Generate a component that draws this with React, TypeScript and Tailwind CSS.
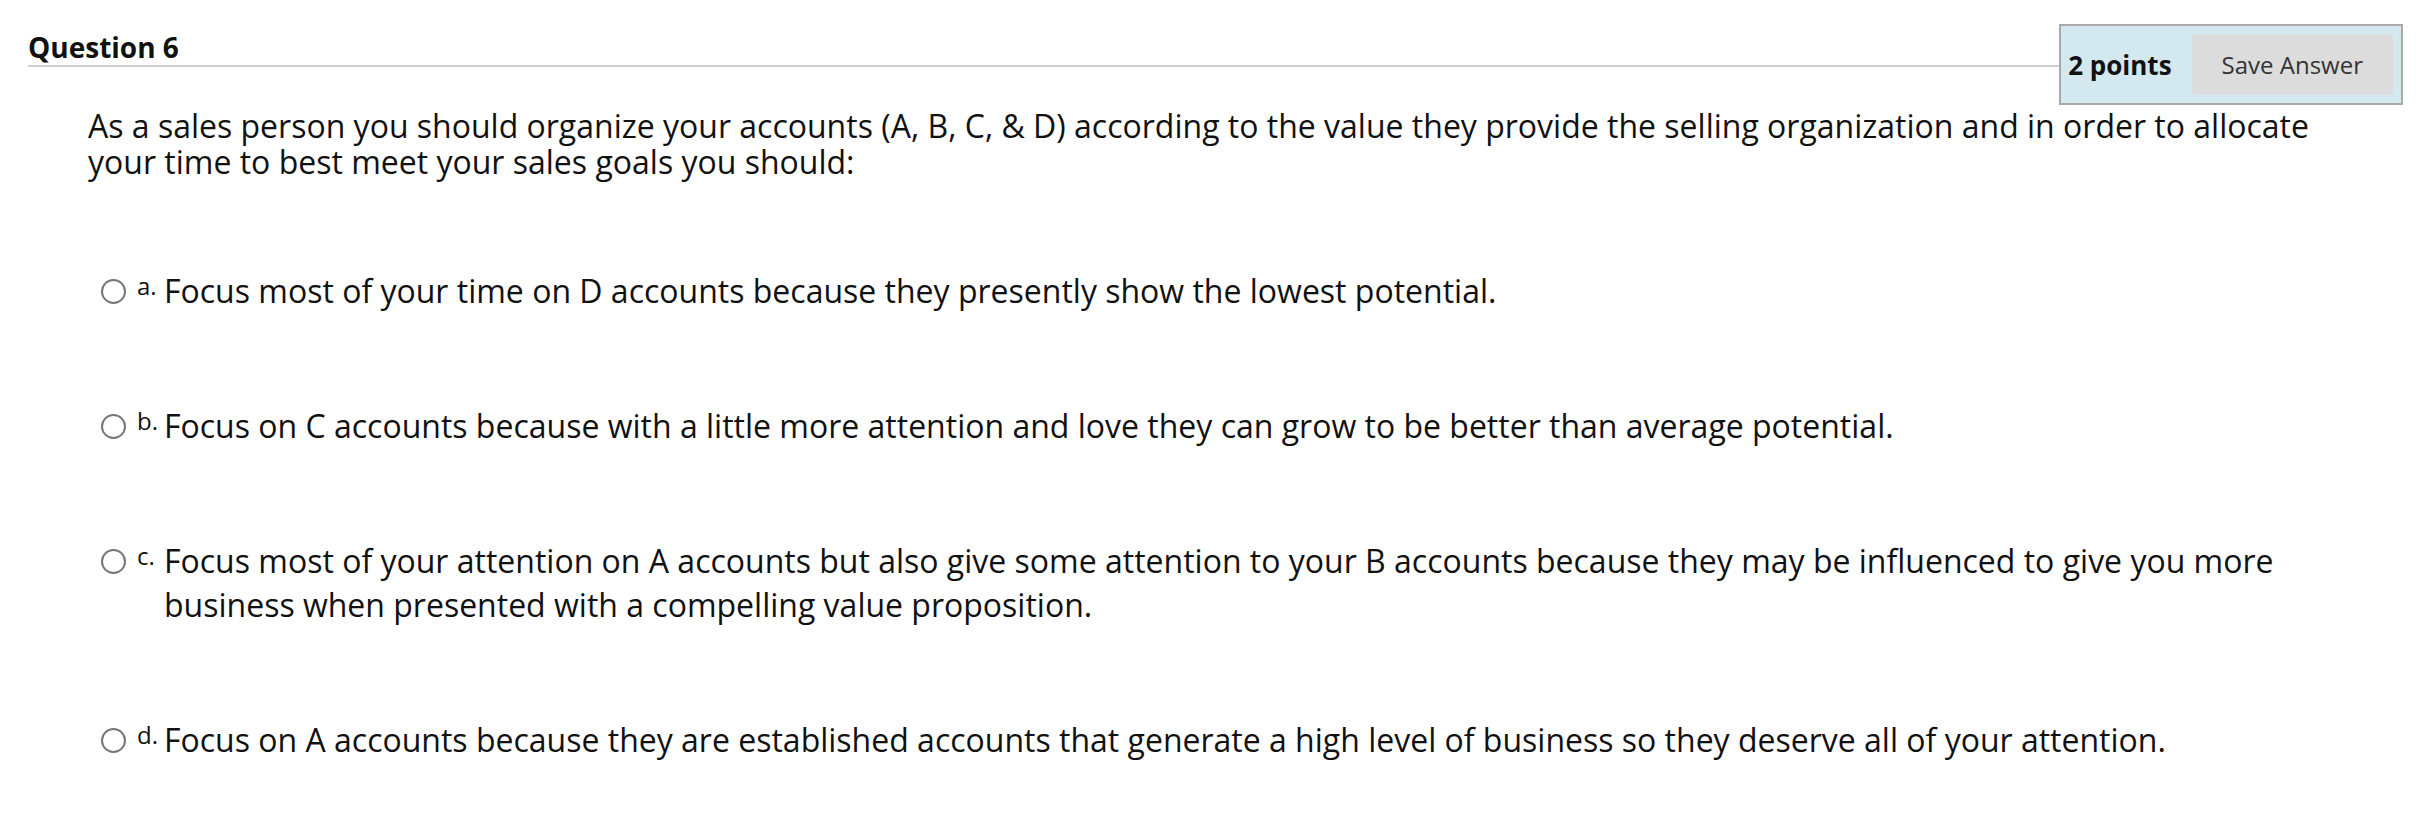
const options = [
  { key: 'a.', text: 'Focus most of your time on D accounts because they presently show the lowest potential.' },
  { key: 'b.', text: 'Focus on C accounts because with a little more attention and love they can grow to be better than average potential.' },
  {
    key: 'c.',
    text: 'Focus most of your attention on A accounts but also give some attention to your B accounts because they may be influenced to give you more business when presented with a compelling value proposition.',
  },
  {
    key: 'd.',
    text: 'Focus on A accounts because they are established accounts that generate a high level of business so they deserve all of your attention.',
  },
];

export default function App() {
  return (
    <div className="min-h-screen bg-white text-[#111] font-['Open_Sans',_'Liberation_Sans',_sans-serif]">
      <div className="flex items-start pl-[28px] pr-[23px] pt-[24px]">
        <div className="flex-1 mt-[6px]">
          <h2 className="text-[28px] font-bold leading-[34px] pb-[1px] border-b-2 border-[#cfcfcf]">Question 6</h2>
        </div>
        <div className="flex items-center border-2 border-[#a9a9a9] bg-[#d4e9ef] pl-[7px] pr-[8px] py-[8px]">
          <span className="text-[26px] font-bold leading-none">2 points</span>
          <button className="ml-[20px] h-[61px] rounded-[4px] bg-[#dcdcdc] px-[30px] text-[24px] text-[#333]">
            Save Answer
          </button>
        </div>
      </div>

      <p className="mt-[3px] pl-[88px] pr-[80px] text-[32px] leading-[36px]">
        As a sales person you should organize your accounts (A, B, C, &amp; D) according to the value they provide the
        selling organization and in order to allocate your time to best meet your sales goals you should:
      </p>

      <div className="mt-[89px] flex flex-col gap-[91px] pl-[101px] pr-[80px]">
        {options.map((o) => (
          <div key={o.key} className="flex items-start">
            <div className="flex h-[44px] w-[25px] shrink-0 items-center">
              <span className="block h-[25px] w-[25px] rounded-full border-2 border-[#767676] bg-white" />
            </div>
            <span className="ml-[11px] w-[27px] shrink-0 text-[24px] leading-[33px]">{o.key}</span>
            <span className="text-[32px] leading-[44px]">{o.text}</span>
          </div>
        ))}
      </div>
    </div>
  );
}
